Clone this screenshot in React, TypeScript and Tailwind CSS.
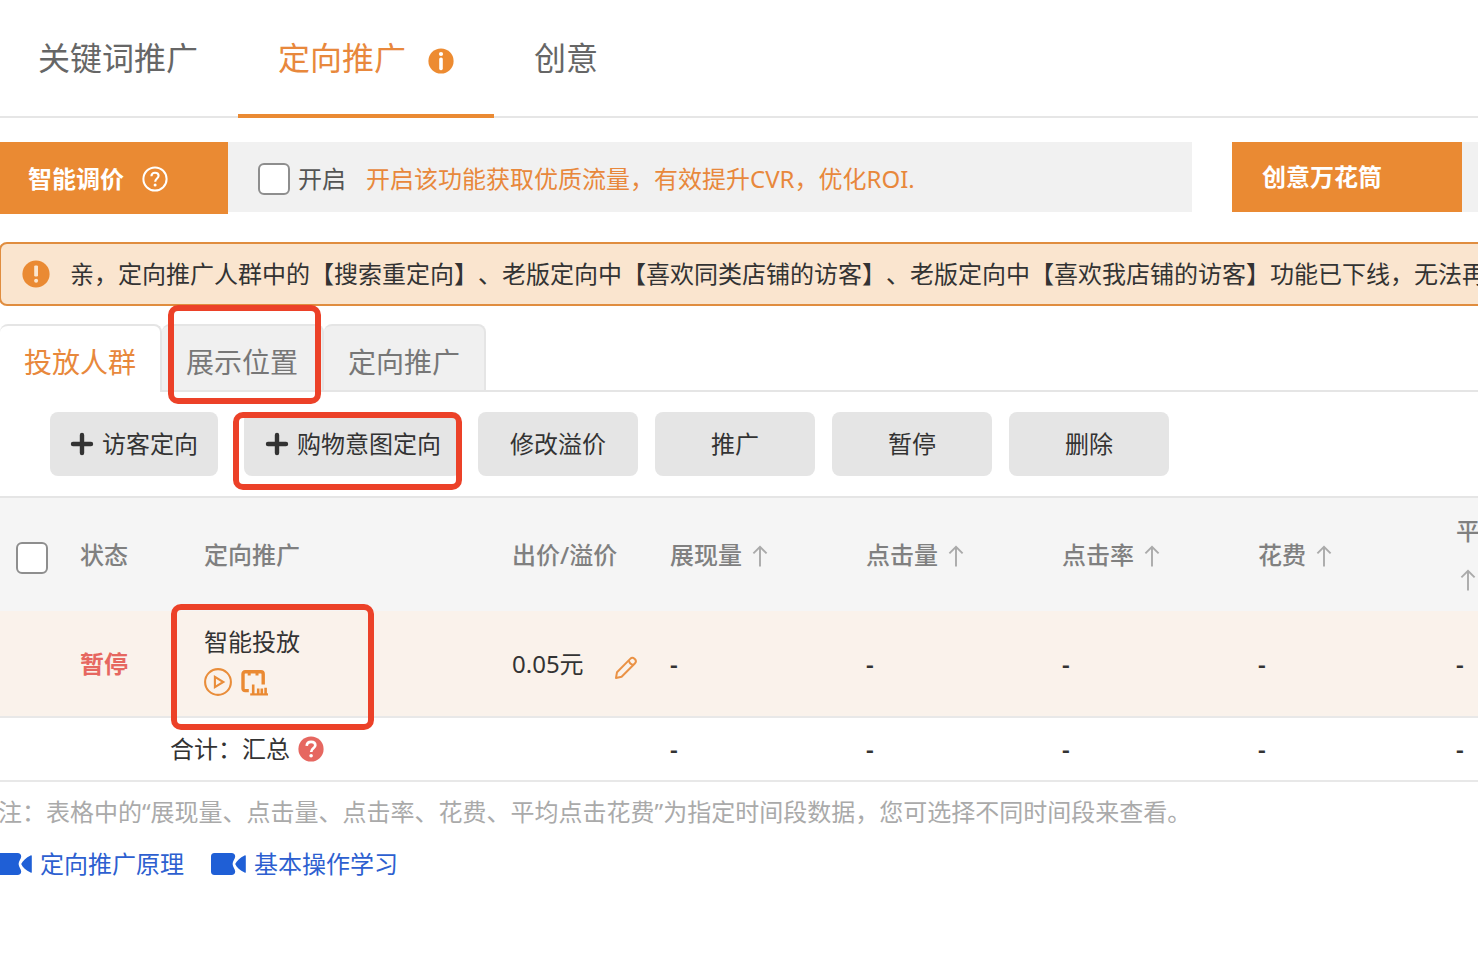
import * as React from "react"
import clsx from "clsx"

interface Column {
  label: string
  sortable?: boolean
  width: string
}

const columns: Column[] = [
  { label: "状态", width: "w-[124px]" },
  { label: "定向推广", width: "w-[308px]" },
  { label: "出价/溢价", width: "w-[158px]" },
  { label: "展现量", sortable: true, width: "w-[196px]" },
  { label: "点击量", sortable: true, width: "w-[196px]" },
  { label: "点击率", sortable: true, width: "w-[196px]" },
  { label: "花费", sortable: true, width: "w-[198px]" },
  { label: "平均点击花费", sortable: true, width: "w-[160px]" },
]

const metrics = ["展现量", "点击量", "点击率", "花费", "平均点击花费"]

const subTabs = [
  { label: "投放人群", active: true },
  { label: "展示位置", marked: true },
  { label: "定向推广" },
]

const actions = ["修改溢价", "推广", "暂停", "删除"]

const links = ["定向推广原理", "基本操作学习"]

function InfoIcon() {
  return (
    <svg viewBox="0 0 26 26" className="size-[26px]" aria-hidden="true">
      <circle cx="13" cy="13" r="12.6" fill="#ed8b31" />
      <circle cx="13" cy="6" r="2.1" fill="#fff" />
      <rect x="11.2" y="9.4" width="3.6" height="12.8" rx="1.6" fill="#fff" />
    </svg>
  )
}

function HelpIcon() {
  return (
    <svg viewBox="0 0 26 26" className="size-[26px]" fill="none" stroke="#fff" aria-hidden="true">
      <circle cx="13" cy="13" r="11.6" strokeWidth="2" />
      <path d="M9.4 10.2c.1-2.2 1.6-3.5 3.6-3.5s3.6 1.2 3.6 3.1c0 2.6-3.4 2.9-3.4 5.9" strokeWidth="2.1" />
      <circle cx="13.1" cy="18.9" r="1.5" fill="#fff" stroke="none" />
    </svg>
  )
}

function HelpSolidIcon() {
  return (
    <svg viewBox="0 0 26 26" className="size-[26px]" fill="none" aria-hidden="true">
      <circle cx="13" cy="13" r="12.6" fill="#e66760" />
      <path d="M8.7 9.9c.2-2.7 1.9-4.1 4.4-4.1 2.4 0 4.2 1.3 4.2 3.5 0 3-4.1 3.1-4.1 6.6" stroke="#fff" strokeWidth="2.7" />
      <circle cx="13.1" cy="19.7" r="1.8" fill="#fff" />
    </svg>
  )
}

function AlertIcon() {
  return (
    <svg viewBox="0 0 28 28" className="size-7 shrink-0" aria-hidden="true">
      <circle cx="14" cy="14" r="13.6" fill="#ea8a33" />
      <rect x="12.2" y="5.4" width="3.8" height="11" rx="1.2" fill="#fbe6cf" />
      <circle cx="14.1" cy="20.8" r="2" fill="#fbe6cf" />
    </svg>
  )
}

function PlusIcon() {
  return (
    <svg viewBox="0 0 24 24" className="size-6" stroke="#333" strokeWidth="4.4" strokeLinecap="round" aria-hidden="true">
      <path d="M12 3v18M3 12h18" />
    </svg>
  )
}

function SortIcon() {
  return (
    <svg viewBox="0 0 16 22" className="inline-block h-[22px] w-4 align-[-3px]" fill="none" stroke="#aaa" strokeWidth="1.9" aria-hidden="true">
      <path d="M8 21.5V2M1.4 8.4L8 1.8l6.6 6.6" />
    </svg>
  )
}

function PlayIcon() {
  return (
    <svg viewBox="0 0 28 28" className="size-7" fill="none" stroke="#e98d3a" strokeWidth="2.1" aria-hidden="true">
      <circle cx="14" cy="14" r="12.9" />
      <path d="M10.9 8.9v10.2l8.4-5.1z" />
    </svg>
  )
}

function ReportIcon() {
  return (
    <svg viewBox="0 0 28 28" className="size-7" fill="none" stroke="#ea8a33" aria-hidden="true">
      <path
        d="M8.8 22.6H5.2c-1.4 0-2.2-.8-2.2-2.2V6c0-1.4.8-2.2 2.2-2.2h15.8c1.4 0 2.2.8 2.2 2.2v10.4"
        strokeWidth="3.4"
      />
      <path d="M9.2 5v2.6M17 5v2.6" strokeWidth="3" />
      <path d="M13.2 16.4V26M18.2 20.4V26M21.8 20.4V26M25.6 19.8V26" strokeWidth="2.6" />
      <path d="M10.2 26.4H28" strokeWidth="2.2" />
    </svg>
  )
}

function PencilIcon() {
  return (
    <svg viewBox="0 0 24 24" className="size-6" fill="none" stroke="#ea9245" strokeWidth="2" strokeLinejoin="round" aria-hidden="true">
      <path d="M2 22l1-5.8L16.2 2.9c1.3-1.3 3-1.3 4.2-.2l.6.6c1.1 1.2 1.1 2.9-.2 4.2L7.6 20.8z" />
      <path d="M14.9 4.4c.4 2.5 2 4.1 4.5 4.5" />
    </svg>
  )
}

function VideoIcon() {
  return (
    <svg viewBox="0 0 36 24" className="h-6 w-9" fill="#1f5fd6" aria-hidden="true">
      <path d="M4.5 1h17C23.800 1 25.200 2.300 25.200 4.400c0 2.300-2.600 4.600-2.600 7.600s2.600 5.100 2.600 7.600c0 2.100-1.400 3.400-3.700 3.400h-17C2.100 23 1 21.800 1 19.500v-15C1 2.200 2.100 1 4.500 1z" />
      <path d="M34.600 3.400c.7-.4 1.200-.1 1.200.7v15.800c0 .8-.5 1.100-1.200.7-4.600-2.200-8-5.300-9.400-8.600 1.400-3.300 4.800-6.400 9.400-8.600z" />
    </svg>
  )
}

// Red frame laid over the element it points at
function Marker({ className }: { className: string }) {
  return (
    <span
      className={clsx("pointer-events-none absolute z-10 rounded-[10px] border-6 border-[#ec4128]", className)}
    />
  )
}

function CheckBox({ className, ...props }: React.InputHTMLAttributes<HTMLInputElement>) {
  return (
    <input
      type="checkbox"
      className={clsx(
        "block size-8 shrink-0 appearance-none rounded-md border-2 border-[#8e8e8e] bg-white checked:bg-[#ea8a33]",
        className,
      )}
      {...props}
    />
  )
}

function MainTabs() {
  return (
    <nav className="flex h-[118px] text-[32px] text-[#666] shadow-[inset_0_-2px_0_#e6e6e6]">
      <button className="pr-10 pb-0.5 pl-[38px]">关键词推广</button>
      <button className="flex items-center gap-[22px] border-b-4 border-[#ea8a33] px-10 pt-0.5 text-[#e8883c]">
        定向推广
        <span className="mt-1.5">
          <InfoIcon />
        </span>
      </button>
      <button className="px-10 pb-0.5">创意</button>
    </nav>
  )
}

function PromoBar() {
  return (
    <div className="mt-6 flex h-[72px] items-start gap-10">
      <div className="flex flex-1">
        <div className="flex h-[72px] w-[228px] items-center gap-[18px] bg-[#ea8a33] pt-0.5 pl-7 font-bold text-white">
          智能调价
          <HelpIcon />
        </div>
        <div className="flex h-[70px] flex-1 items-center bg-[#f1f1f1] pt-1 pl-[30px] whitespace-nowrap">
          <label className="flex items-center gap-2 text-[#555]">
            <CheckBox />
            开启
          </label>
          <span className="ml-5 text-[#e8883c]">开启该功能获取优质流量，有效提升CVR，优化ROI.</span>
        </div>
      </div>
      <div className="flex h-[70px] w-[246px] bg-[#f1f1f1]">
        <div className="flex w-[230px] items-center bg-[#ea8a33] pl-[30px] font-bold text-white">创意万花筒</div>
      </div>
    </div>
  )
}

function Notice() {
  return (
    <div className="mt-7 -mr-2 -ml-px flex h-16 items-center gap-5 overflow-hidden rounded-lg border-2 border-[#e08d3f] bg-[#fae5cf] pl-[21px] whitespace-nowrap text-[#333]">
      <AlertIcon />
      <p>
        亲，定向推广人群中的【搜索重定向】、老版定向中【喜欢同类店铺的访客】、老版定向中【喜欢我店铺的访客】功能已下线，无法再
      </p>
    </div>
  )
}

function SubTabs() {
  return (
    <div className="mt-[18px] flex h-[68px] text-[28px]">
      {subTabs.map((tab) => (
        <button
          key={tab.label}
          className={clsx(
            "relative rounded-t-lg border-t-2 border-r-2 border-[#e5e5e5] px-6",
            tab.active ? "pt-1.5 text-[#e8883c]" : "border-b-2 bg-[#f0f0f0] pt-2 text-[#777]",
          )}
        >
          {tab.label}
          {tab.marked && <Marker className="-top-[21px] left-1.5 h-[99px] w-[153px]" />}
        </button>
      ))}
      <div className="flex-1 border-b-2 border-[#e5e5e5]" />
    </div>
  )
}

function Toolbar() {
  const button = "h-16 rounded-lg bg-[#e5e5e5]"

  return (
    <div className="mt-5 flex gap-[17px] pl-[50px] text-[#333]">
      <button className={clsx(button, "flex w-[168px] items-center gap-2 pl-5")}>
        <PlusIcon />
        访客定向
      </button>
      <button className={clsx(button, "relative ml-[9px] flex w-[217px] items-center gap-2 pl-[21px]")}>
        <PlusIcon />
        购物意图定向
        <Marker className="top-0 -left-[11px] h-[78px] w-[229px]" />
      </button>
      {actions.map((action) => (
        <button key={action} className={clsx(button, "w-40")}>
          {action}
        </button>
      ))}
    </div>
  )
}

function TargetTable() {
  return (
    <div className="mt-5 overflow-hidden">
      <table className="w-[1612px] table-fixed border-t-2 border-[#e5e5e5] text-left text-[#333]">
        <thead className="bg-[#f5f5f5] text-[#808080]">
          <tr className="h-[114px] leading-[48px]">
            <th className="w-20 pt-1.5 pl-4">
              <CheckBox aria-label="全选" />
            </th>
            {columns.map((col) => (
              <th key={col.label} className={clsx("font-medium", col.width)}>
                {col.label}
                {col.sortable && (
                  <>
                    {" "}
                    <button className="ml-1" aria-label={`${col.label}排序`}>
                      <SortIcon />
                    </button>
                  </>
                )}
              </th>
            ))}
          </tr>
        </thead>
        <tbody>
          <tr className="h-[106px] border-b-2 border-[#e8e8e8] bg-[#faf2eb]">
            <td />
            <td className="font-bold text-[#e66760]">暂停</td>
            <td className="relative pb-2">
              <div>智能投放</div>
              <div className="mt-2 flex gap-2">
                <PlayIcon />
                <ReportIcon />
              </div>
              <Marker className="-top-[7px] -left-[33px] h-[126px] w-[203px]" />
            </td>
            <td>
              <div className="flex items-center gap-[30px]">
                0.05元
                <button className="mt-2" aria-label="修改出价">
                  <PencilIcon />
                </button>
              </div>
            </td>
            {metrics.map((name) => (
              <td key={name} className="font-semibold">
                -
              </td>
            ))}
          </tr>
          <tr className="h-16 border-b-2 border-[#e8e8e8]">
            <td colSpan={4} className="pl-[170px]">
              <div className="flex items-center gap-2">
                合计：汇总
                <HelpSolidIcon />
              </div>
            </td>
            {metrics.map((name) => (
              <td key={name} className="font-semibold">
                -
              </td>
            ))}
          </tr>
        </tbody>
      </table>
    </div>
  )
}

export default function App() {
  return (
    <main className="min-h-screen overflow-hidden bg-white font-['Noto_Sans','Noto_Sans_CJK_SC',sans-serif] text-[24px] leading-[36px] [text-spacing-trim:space-all]">
      <MainTabs />
      <PromoBar />
      <Notice />
      <SubTabs />
      <Toolbar />
      <TargetTable />
      <p className="mt-3 -ml-0.5 text-[#aaa]">
        注：表格中的“展现量、点击量、点击率、花费、平均点击花费”为指定时间段数据，您可选择不同时间段来查看。
      </p>
      <div className="mt-4 -ml-1 flex gap-[26px] text-[#2d5fd0]">
        {links.map((link) => (
          <a key={link} href="#" className="flex items-center gap-2">
            <VideoIcon />
            {link}
          </a>
        ))}
      </div>
    </main>
  )
}
